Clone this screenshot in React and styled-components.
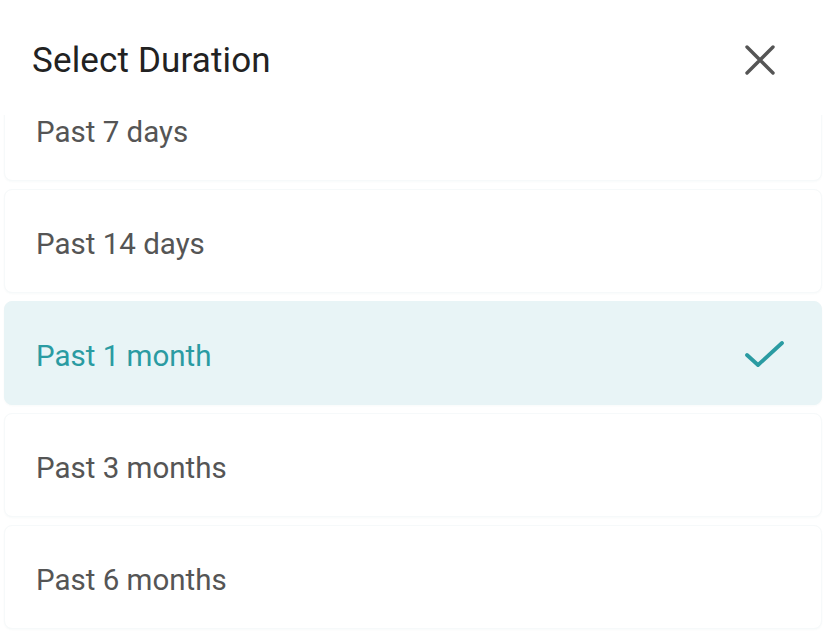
import React from "react";
import styled, { createGlobalStyle } from "styled-components";

const Global = createGlobalStyle`
  html, body { margin: 0; padding: 0; background: #ffffff; }
  body { font-family: Roboto, "Noto Sans", Arial, sans-serif; }
`;

const Sheet = styled.div`
  width: 824px;
  height: 633px;
  overflow: hidden;
  display: flex;
  flex-direction: column;
  background: #ffffff;
`;

const Header = styled.div`
  position: relative;
  z-index: 2;
  flex: none;
  height: 115px;
  box-sizing: border-box;
  padding: 0 49px 0 32px;
  display: flex;
  align-items: flex-start;
  justify-content: space-between;
  background: #ffffff;
`;

const Title = styled.h1`
  margin: 0;
  padding-top: 39px;
  font-size: 35px;
  line-height: 44px;
  font-weight: 400;
  color: #222222;
  letter-spacing: 0.15px;
`;

const CloseButton = styled.button`
  margin-top: 45px;
  width: 30px;
  height: 30px;
  padding: 0;
  border: none;
  background: none;
  display: flex;
  align-items: center;
  justify-content: center;
  cursor: pointer;
`;

const List = styled.div`
  margin-top: -38px;
  padding: 0 2px 0 4px;
  display: flex;
  flex-direction: column;
  gap: 8px;
`;

const Option = styled.div`
  height: 104px;
  box-sizing: border-box;
  border-radius: 8px;
  padding: 6px 36px 0 31px;
  display: flex;
  align-items: center;
  justify-content: space-between;
  background: ${(p) => (p.$selected ? "#e8f4f6" : "#ffffff")};
  border: 1px solid ${(p) => (p.$selected ? "#e8f4f6" : "#f6f9fa")};
  box-shadow: 0 1px 2px rgba(40, 80, 100, 0.03);
`;

const Label = styled.span`
  font-size: 29.5px;
  line-height: 36px;
  font-weight: 400;
  color: ${(p) => (p.$selected ? "#2a9ba2" : "#555555")};
`;

const options = ["Past 7 days", "Past 14 days", "Past 1 month", "Past 3 months", "Past 6 months"];
const selected = "Past 1 month";

export default function App() {
  return (
    <>
      <Global />
      <Sheet>
        <Header>
          <Title>Select Duration</Title>
          <CloseButton aria-label="Close">
            <svg width="30" height="30" viewBox="0 0 30 30">
              <path d="M2 2 L28 28 M28 2 L2 28" stroke="#555555" strokeWidth="3.4" strokeLinecap="round" fill="none" />
            </svg>
          </CloseButton>
        </Header>
        <List>
          {options.map((o) => (
            <Option key={o} $selected={o === selected}>
              <Label $selected={o === selected}>{o}</Label>
              {o === selected && (
                <svg width="42" height="30" viewBox="0 0 42 30">
                  <path d="M4 14 L15 24 L39 2" stroke="#2a9ba2" strokeWidth="3.8" strokeLinecap="round" strokeLinejoin="round" fill="none" />
                </svg>
              )}
            </Option>
          ))}
        </List>
      </Sheet>
    </>
  );
}
